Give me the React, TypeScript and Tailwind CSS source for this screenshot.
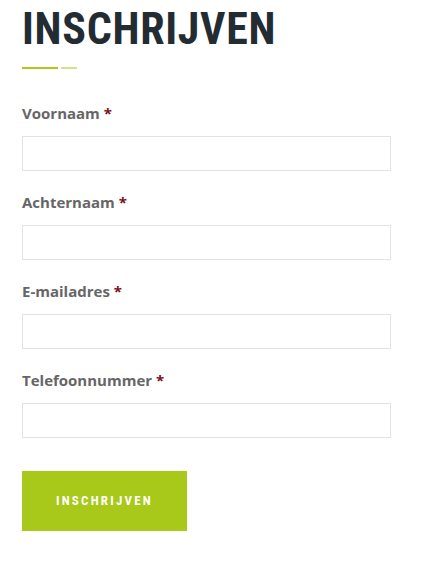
const fields = ['Voornaam', 'Achternaam', 'E-mailadres', 'Telefoonnummer'];

export default function App() {
  return (
    <div className="min-h-screen bg-white px-[22px] pt-[7px]">
      <h1 className="font-['Roboto',sans-serif] font-stretch-condensed text-[44px] font-bold uppercase leading-[44px] tracking-[0.7px] text-[#232c33]">
        Inschrijven
      </h1>
      <div className="mt-[16px] flex gap-[3px]">
        <span className="h-[2px] w-[36px] bg-[#a8c81a]" />
        <span className="h-[2px] w-[16px] bg-[#d3e28a]" />
      </div>

      <form className="mt-[35px] flex w-[369px] flex-col gap-[22px]">
        {fields.map((f) => (
          <label key={f} className="flex flex-col gap-[14px]">
            <span className="font-['Open_Sans',sans-serif] text-[15px] font-bold leading-[18px] text-[#666666]">
              {f} <span className="text-[#7a0f1a]">*</span>
            </span>
            <input className="h-[35px] w-full border border-[#e3e3e3] px-2 outline-none" type="text" />
          </label>
        ))}
        <button
          type="button"
          className="mt-[11px] h-[60px] w-[165px] bg-[#a8c81a] font-['Roboto',sans-serif] font-stretch-condensed text-[13px] font-bold uppercase tracking-[2.2px] text-white"
        >
          Inschrijven
        </button>
      </form>
    </div>
  );
}
